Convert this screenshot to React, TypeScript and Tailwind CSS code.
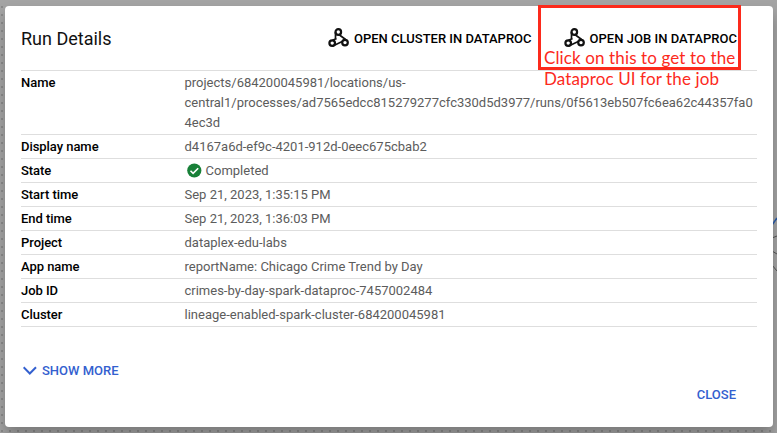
import React from "react";

function DataprocIcon() {
  return (
    <svg width="22" height="20" viewBox="0 0 22 20" fill="none" stroke="#111" strokeWidth="2.2" className="relative -top-px shrink-0">
      <circle cx="10.3" cy="4" r="2.8" />
      <circle cx="4.2" cy="15.1" r="2.8" />
      <circle cx="17" cy="14.6" r="2.8" />
      <path d="M7.5 4V10.8M11.2 6.8L17.6 11.5M4.6 12.3L8.6 10.4M4.8 17.9L14.2 13.6" strokeWidth="1.7" />
    </svg>
  );
}

function Row({ label, children }: { label: string; children: React.ReactNode }) {
  return (
    <div className="flex border-b border-[#dedede] pt-0.5 pb-px text-[13px] leading-5">
      <div className="w-[163.5px] shrink-0 font-medium tracking-[-0.05px] text-black">{label}</div>
      <div className="min-w-0 flex-1 text-[#5c5c5c]">{children}</div>
    </div>
  );
}

export default function App() {
  return (
    <div className="relative h-[433px] w-[777px] overflow-hidden bg-[#a4a4a4] px-[5px] pt-1.5 font-[Roboto,sans-serif]">
      <svg className="absolute inset-0" width="777" height="433">
        <defs>
          <pattern id="dots" x="1" y="6" width="8" height="8" patternUnits="userSpaceOnUse">
            <rect width="2" height="2" fill="#8b8b8b" />
          </pattern>
        </defs>
        <rect y="6" width="777" height="427" fill="url(#dots)" />
        <rect x="773" width="4" height="427" fill="#a4a4a4" />
        <path d="M772 225L777 218" stroke="#285aa8" strokeWidth="1.5" />
        <path d="M772 238L777 236M772 251L777 254M772 265L777 271" stroke="#555" />
      </svg>
      <div className="relative flex h-[421px] w-[768px] flex-col rounded bg-white px-4 shadow-[0_9px_14px_rgba(0,0,0,0.25)]">
        <div className="flex h-16 items-center pt-0.5">
          <h1 className="flex-1 text-lg text-[#111]">Run Details</h1>
          <button className="flex items-center gap-1 text-[13px] font-medium text-black">
            <DataprocIcon />
            OPEN CLUSTER IN DATAPROC
          </button>
          <button className="mr-5 ml-[32px] flex items-center gap-1 text-[13px] font-medium text-black">
            <DataprocIcon />
            <span className="tracking-[0.03px]">OPEN JOB IN DATAPROC</span>
          </button>
        </div>
        <div className="border-t border-[#dedede]">
          <Row label="Name">
            projects/684200045981/locations/us-
            <br />
            central1/processes/ad7565edcc815279277cfc330d5d3977/runs/0f5613eb507fc6ea62c44357fa0
            <br />
            4ec3d
          </Row>
          <Row label="Display name">d4167a6d-ef9c-4201-912d-0eec675cbab2</Row>
          <Row label="State">
            <span className="flex items-center gap-1 pl-px">
              <svg width="16" height="16" viewBox="0 0 16 16">
                <circle cx="8.3" cy="7.5" r="7.1" fill="#188038" />
                <path d="M4.5 7.8L7.1 10.4L12.2 5.2" fill="none" stroke="#fff" strokeWidth="1.6" />
              </svg>
              Completed
            </span>
          </Row>
          <Row label="Start time">Sep 21, 2023, 1:35:15 PM</Row>
          <Row label="End time">Sep 21, 2023, 1:36:03 PM</Row>
          <Row label="Project">dataplex-edu-labs</Row>
          <Row label="App name">reportName: Chicago Crime Trend by Day</Row>
          <Row label="Job ID">crimes-by-day-spark-dataproc-7457002484</Row>
          <Row label="Cluster">lineage-enabled-spark-cluster-684200045981</Row>
        </div>
        <button className="mt-[34px] flex h-5 items-center gap-1 self-start pl-0.5 text-[13px] font-medium text-[#3360cf]">
          <svg width="15" height="10" viewBox="0 0 15 10" fill="none" stroke="#3360cf" strokeWidth="2">
            <path d="M0.6 1.3L6.8 7.5L13 1.3" />
          </svg>
          SHOW MORE
        </button>
        <button className="mt-1 mr-[21px] h-5 self-end text-[13px] font-medium text-[#3360cf]">CLOSE</button>
      </div>
      <div className="absolute top-[5px] left-[538px] h-[65px] w-[203px] border-[3px] border-[#fc2a1c]" />
      <div className="absolute top-[47px] left-[544px] font-[Lato,sans-serif] text-[17px] leading-[21px] tracking-[0.12px] whitespace-nowrap text-[#fc2a1c]">
        Click on this to get to the
        <br />
        Dataproc UI for the job
      </div>
    </div>
  );
}
